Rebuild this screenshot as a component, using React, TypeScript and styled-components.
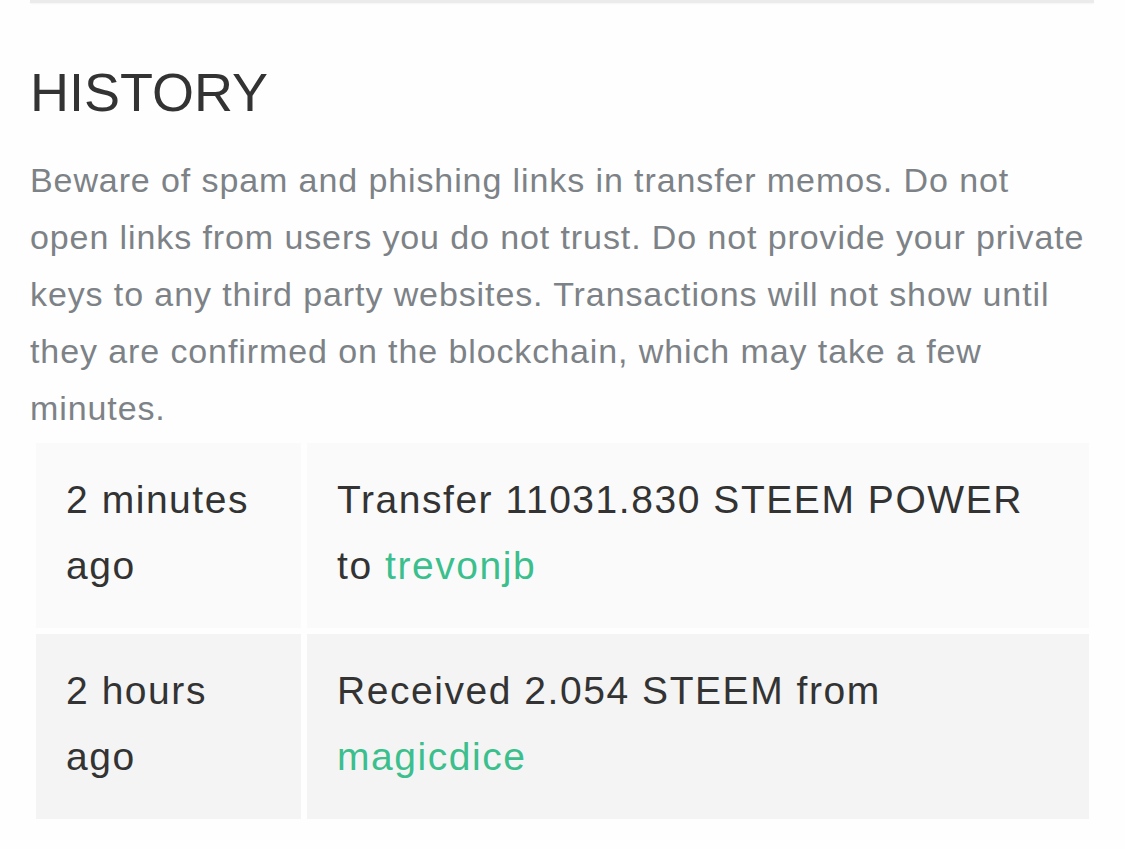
import React from 'react'
import styled, { createGlobalStyle } from 'styled-components'

interface Transfer {
  when: string
  text: string
  user: string
}

const transfers: Transfer[] = [
  { when: '2 minutes ago', text: 'Transfer 11031.830 STEEM POWER to', user: 'trevonjb' },
  { when: '2 hours ago', text: 'Received 2.054 STEEM from', user: 'magicdice' },
]

const App: React.FC = () => {
  return (
    <>
      <GlobalStyle />
      <StyledPage>
        <StyledCardEdge />
        <StyledTitle>HISTORY</StyledTitle>
        <StyledNotice>
          Beware of spam and phishing links in transfer memos. Do not open links from users you do
          not trust. Do not provide your private keys to any third party websites. Transactions will
          not show until they are confirmed on the blockchain, which may take a few minutes.
        </StyledNotice>
        <StyledTable>
          <tbody>
            {transfers.map((t, i) => (
              <StyledRow key={t.user} $odd={i % 2 === 1}>
                <StyledWhen>{t.when}</StyledWhen>
                <StyledWhat>
                  {t.text} <StyledUser href='#'>{t.user}</StyledUser>
                </StyledWhat>
              </StyledRow>
            ))}
          </tbody>
        </StyledTable>
      </StyledPage>
    </>
  )
}

const GlobalStyle = createGlobalStyle`
  html, body {
    margin: 0;
    background: #fefefe;
  }
  body {
    font-family: 'Liberation Sans', Arial, sans-serif;
    color: #333;
  }
`

const StyledPage = styled.div`
  padding: 0 30px;
`

const StyledCardEdge = styled.div`
  height: 3px;
  margin-right: 1px;
  background: #ebebeb;
  box-shadow: 0 1px 2px rgba(0, 0, 0, 0.04);
`

const StyledTitle = styled.h2`
  margin: 57px 0 0;
  font-size: 54px;
  font-weight: 400;
  line-height: 1.2;
  color: #333;
`

const StyledNotice = styled.p`
  margin: 27px 0 0;
  font-size: 34px;
  letter-spacing: 0.9px;
  line-height: 57px;
  color: #7d8287;
`

const StyledTable = styled.table`
  width: 100%;
  border-collapse: separate;
  border-spacing: 6px;
  font-size: 39px;
  letter-spacing: 1.55px;
  line-height: 66px;
  color: #333;
`

const StyledRow = styled.tr<{ $odd: boolean }>`
  td {
    background: ${(p) => (p.$odd ? '#f4f4f4' : '#fafafa')};
    padding: 24px 30px 29px;
    vertical-align: top;
  }
`

const StyledWhen = styled.td`
  width: 205px;
`

const StyledWhat = styled.td``

const StyledUser = styled.a`
  color: #3bbf8d;
  text-decoration: none;
`

export default App
